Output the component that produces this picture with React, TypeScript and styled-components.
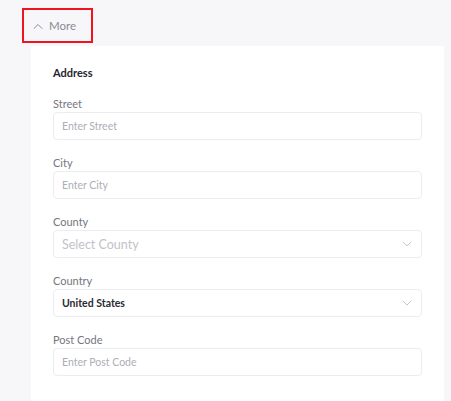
import styled, { createGlobalStyle } from 'styled-components';

const GlobalStyle = createGlobalStyle`
  html, body {
    margin: 0;
    padding: 0;
    background: #f7f7fa;
    font-family: Lato, "Open Sans", "Liberation Sans", sans-serif;
  }
`;

interface Field {
  label: string;
  placeholder?: string;
  value?: string;
  select?: boolean;
}

const fields: Field[] = [
  { label: 'Street', placeholder: 'Enter Street' },
  { label: 'City', placeholder: 'Enter City' },
  { label: 'County', placeholder: 'Select County', select: true },
  { label: 'Country', value: 'United States', select: true },
  { label: 'Post Code', placeholder: 'Enter Post Code' },
];

const Chevron = ({ up }: { up?: boolean }) => (
  <svg width="10" height="6" viewBox="0 0 10 6" fill="none">
    <path
      d={up ? 'M1 5.5L5 1.5L9 5.5' : 'M1 1L5 5L9 1'}
      stroke="currentColor"
      strokeWidth="1"
      strokeLinecap="round"
      strokeLinejoin="round"
    />
  </svg>
);

const App = () => {
  return (
    <Page>
      <GlobalStyle />
      <Toggle>
        <Chevron up />
        <span>More</span>
      </Toggle>
      <Card>
        <Heading>Address</Heading>
        {fields.map(f => (
          <FieldBlock key={f.label}>
            <Label>{f.label}</Label>
            <Box $select={f.select} $filled={!!f.value}>
              <span>{f.value || f.placeholder}</span>
              {f.select && (
                <Arrow>
                  <Chevron />
                </Arrow>
              )}
            </Box>
          </FieldBlock>
        ))}
      </Card>
    </Page>
  );
};

const Page = styled.div`
  padding: 8px 0 0 22px;
  width: 451px;
  height: 401px;
  box-sizing: border-box;
  overflow: hidden;
`;

const Toggle = styled.div`
  width: 71px;
  height: 35px;
  box-sizing: border-box;
  border: 2px solid #f0141e;
  display: flex;
  align-items: center;
  gap: 6px;
  padding-left: 9px;
  color: #8a8a94;
  font-size: 11.5px;
  font-weight: 400;
`;

const Card = styled.div`
  margin: 3px 0 0 9px;
  width: 413px;
  height: 360px;
  box-sizing: border-box;
  background: #ffffff;
  padding: 20px 22px 0;
  display: flex;
  flex-direction: column;
`;

const Heading = styled.div`
  font-size: 11px;
  font-weight: 700;
  color: #25252f;
  line-height: 13px;
  margin-bottom: 18px;
`;

const FieldBlock = styled.div`
  display: flex;
  flex-direction: column;
  margin-bottom: 16px;
`;

const Label = styled.div`
  font-size: 11px;
  color: #76767f;
  line-height: 14px;
  margin-bottom: 1px;
`;

const Box = styled.div<{ $select?: boolean; $filled?: boolean }>`
  height: 28px;
  box-sizing: border-box;
  border: 1px solid #ededf1;
  border-radius: 4px;
  display: flex;
  align-items: center;
  justify-content: space-between;
  padding: 0 9px 0 8px;
  font-size: ${p => (p.$select && !p.$filled ? '12.5px' : '10.5px')};
  color: ${p => (p.$filled ? '#2a2a33' : p.$select ? '#c2c2c8' : '#aeaeb6')};
  font-weight: ${p => (p.$filled ? 700 : 400)};
`;

const Arrow = styled.span`
  display: flex;
  color: #c6c6cc;
`;

export default App;
